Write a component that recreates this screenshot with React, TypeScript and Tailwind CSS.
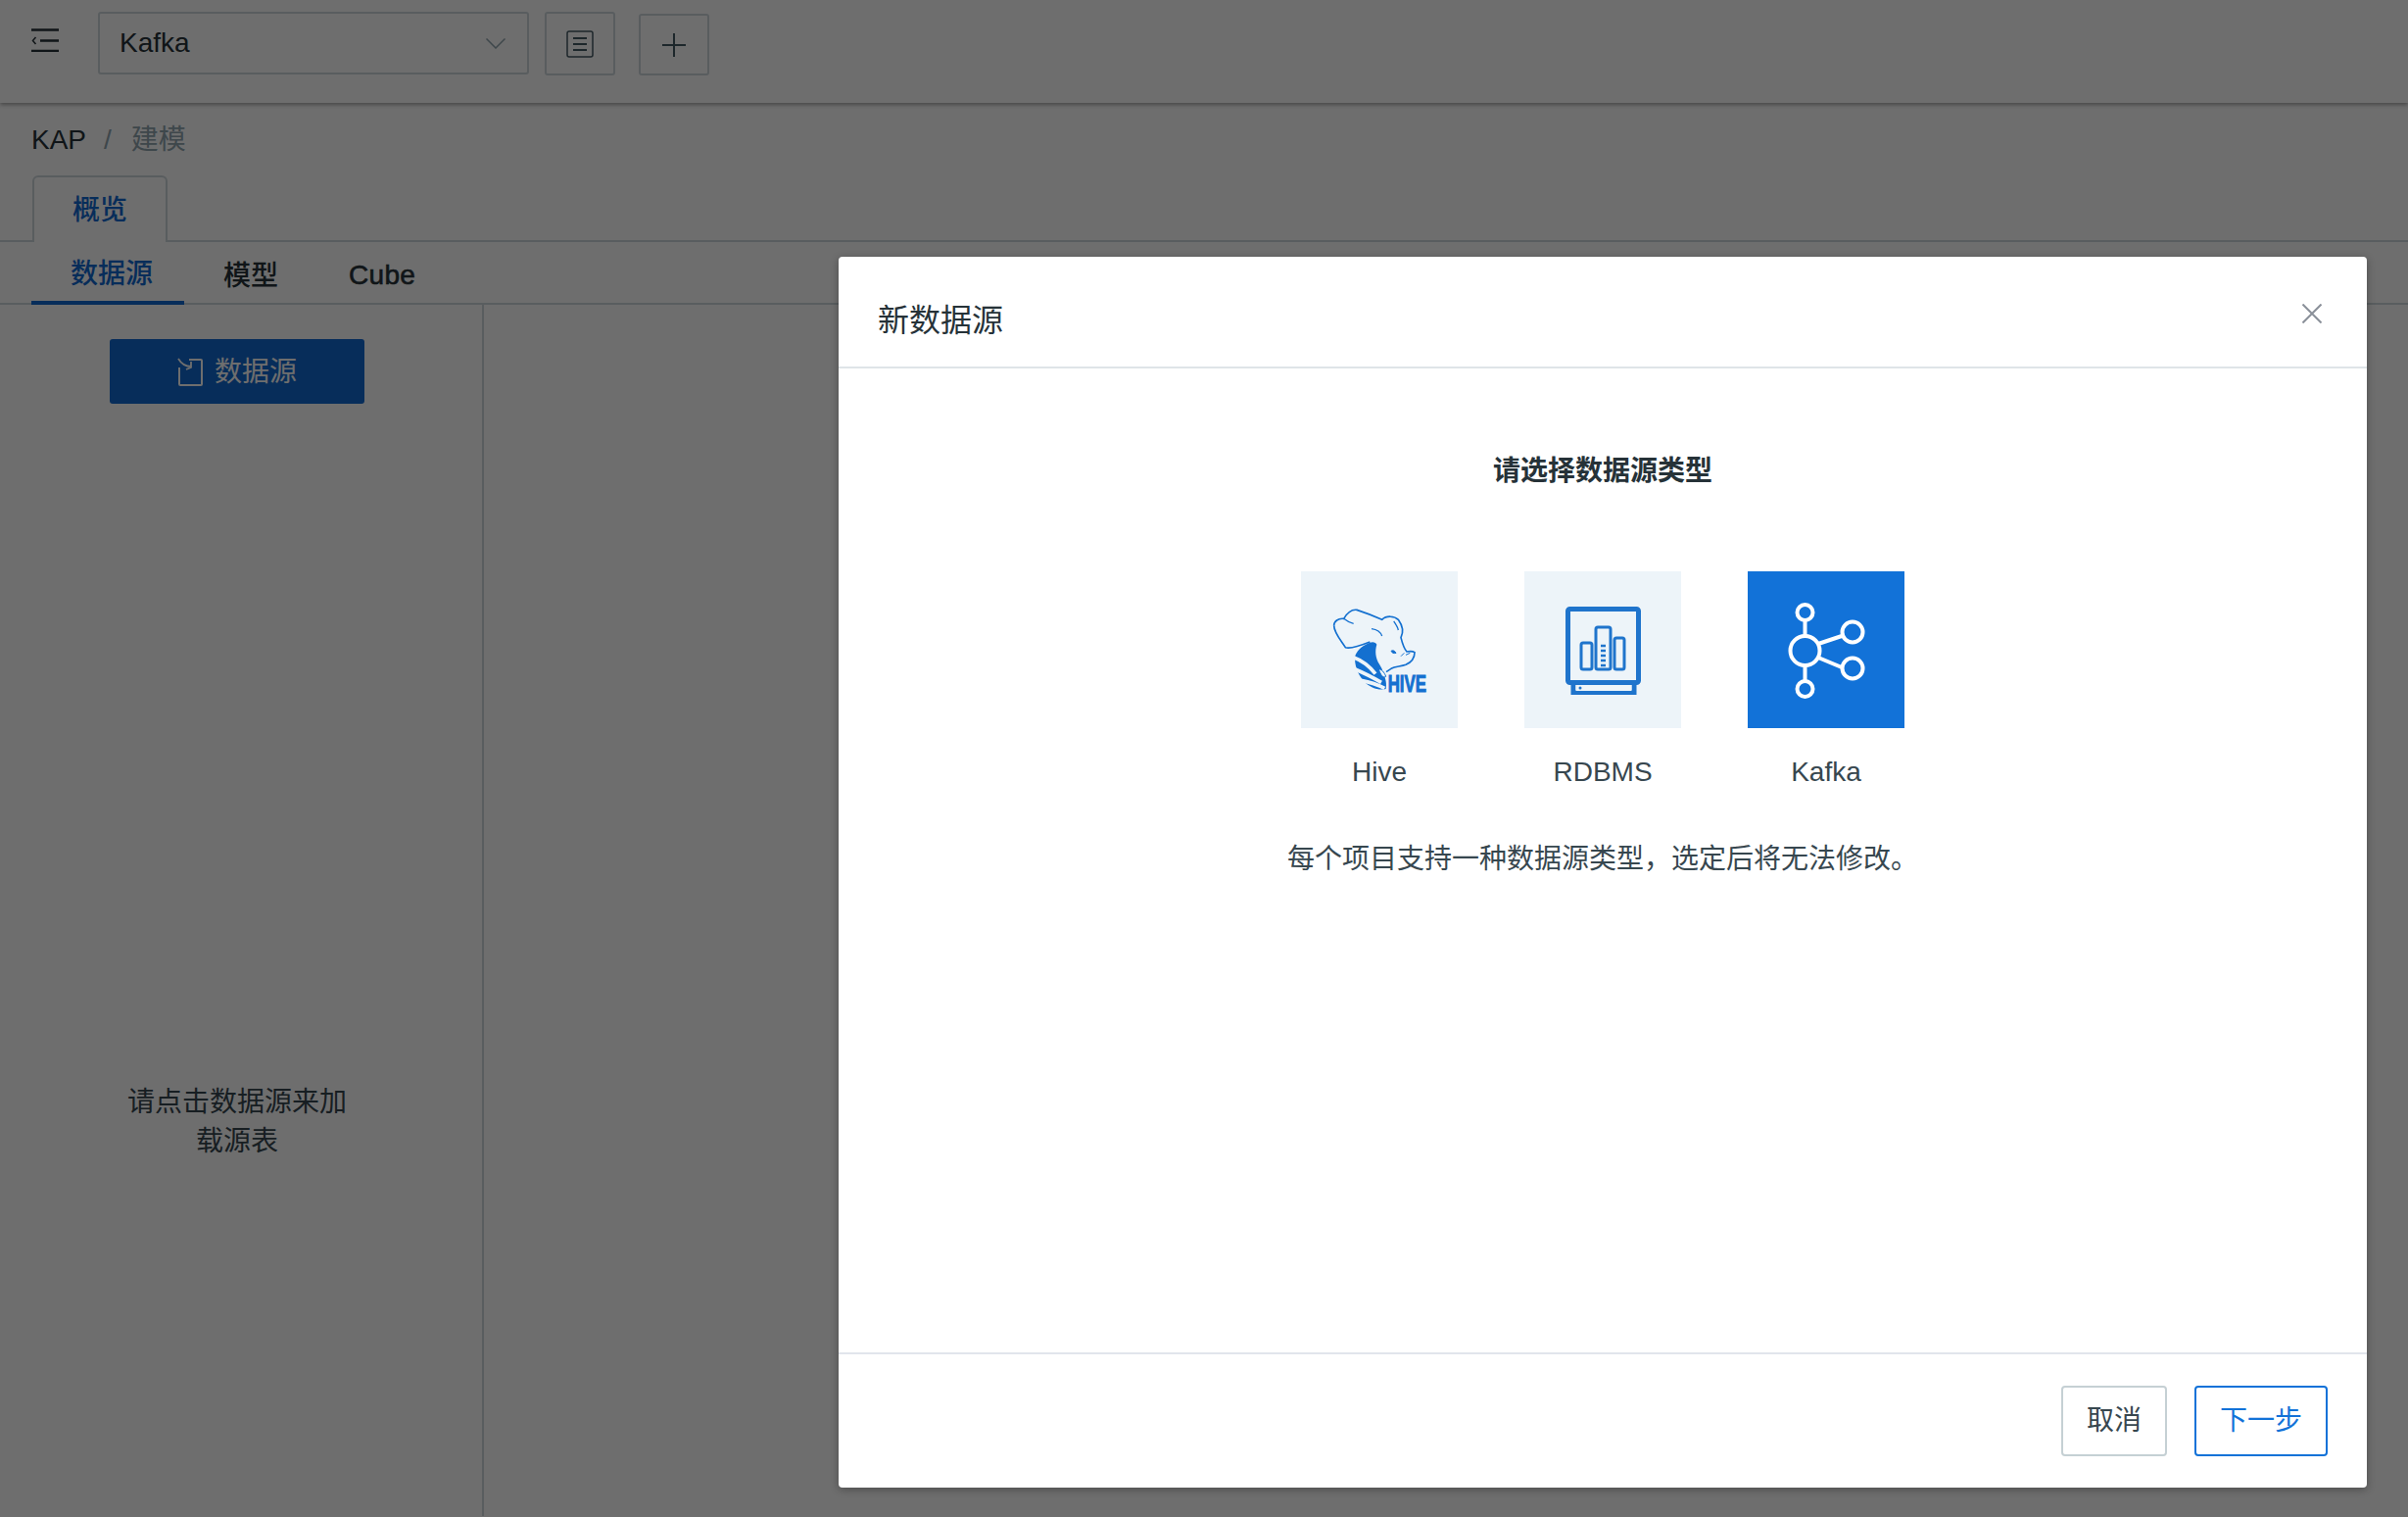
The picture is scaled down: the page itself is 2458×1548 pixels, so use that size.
const sans = "font-['Liberation_Sans','Noto_Sans_CJK_SC',sans-serif]";

const HiveLogo = () => (
  <svg viewBox="24 12 480 480" className="w-[160px] h-[160px]" fill="none" stroke="#1470d0">
    <path d="M235 230 C245 226 254 230 256 236 C250 255 252 278 264 296 C270 306 275 314 274 322 C280 334 288 350 284 372 C262 378 236 368 218 350 C198 328 186 298 190 270 C198 250 216 237 235 230 Z" fill="#1470d0" stroke="none" />
    <path d="M186 276 C208 284 232 300 252 326 M190 312 C214 322 242 336 270 352 M208 346 C230 350 254 356 280 370" stroke="#edf4f9" strokeWidth="11" />
    <path d="M125 178 C125 165 138 155 155 157 C165 140 180 128 195 130 C220 138 250 150 272 160 C285 147 310 148 322 160 C335 178 340 195 330 215 C335 235 340 250 348 258 C358 256 366 256 372 260 C372 275 362 290 345 298 C328 304 312 303 300 310 L285 320" strokeWidth="5" />
    <path d="M125 178 C125 200 145 222 160 245 C175 250 205 240 235 228" strokeWidth="5" />
    <path d="M155 157 C165 165 175 170 185 172 M240 188 C255 190 268 198 272 210 M308 165 C315 175 320 182 322 192" strokeWidth="4" />
    <path d="M300 256 C306 252 312 256 315 262 C308 264 303 262 300 256 Z M340 262 L330 272 M345 268 L358 262" fill="#1470d0" strokeWidth="3" />
    <path d="M262 312 C270 310 280 322 284 334 C276 340 268 330 262 312 Z" fill="#edf4f9" strokeWidth="3" />
    <text x="290" y="380" fill="#1470d0" stroke="#1470d0" strokeWidth="3" textLength="118" lengthAdjust="spacingAndGlyphs" className="font-['Liberation_Sans',sans-serif] font-bold text-[72px]">HIVE</text>
  </svg>
);

const RdbmsIcon = () => (
  <svg viewBox="0 0 160 160" className="w-[160px] h-[160px]" fill="none" stroke="#1f74cc">
    <rect x="44.5" y="38.5" width="72" height="75" rx="2" strokeWidth="5" />
    <path d="M50 114 V123.5 H112 V114" strokeWidth="5" />
    <rect x="52.5" y="116" width="57" height="6" fill="#edf4f9" stroke="none" />
    <circle cx="57" cy="119" r="1.5" fill="#1f74cc" stroke="none" />
    <rect x="58" y="73" width="11" height="27" rx="2" strokeWidth="3" />
    <rect x="73" y="57" width="15" height="43" rx="2" strokeWidth="3" />
    <rect x="92" y="68" width="10" height="32" rx="2" strokeWidth="3" />
    <path d="M78 76 H83 M78 81 H83 M78 86 H83 M78 91 H83 M78 96 H83" strokeWidth="2.5" />
  </svg>
);

const KafkaIcon = () => (
  <svg viewBox="0 0 160 160" className="w-[160px] h-[160px]" fill="none" stroke="#fff" strokeWidth="4">
    <circle cx="58.5" cy="81" r="15" />
    <circle cx="58.5" cy="42" r="8" />
    <circle cx="58.5" cy="120" r="8" />
    <circle cx="107" cy="62" r="10.5" />
    <circle cx="107" cy="99" r="10.5" />
    <path d="M58.5 50 V66 M58.5 96 V112 M72 74 L96 66 M72 88 L96 98" />
  </svg>
);

const sources = [
  { name: 'Hive', icon: <HiveLogo />, tile: 'bg-[#edf4f9]' },
  { name: 'RDBMS', icon: <RdbmsIcon />, tile: 'bg-[#edf4f9]' },
  { name: 'Kafka', icon: <KafkaIcon />, tile: 'bg-[#1272d8]' },
];

const TopBar = () => (
  <header className="h-[105px] flex items-start bg-white shadow-[0_2px_4px_rgba(0,0,0,0.35)] relative">
    <svg viewBox="0 0 28 24" className="w-[28px] h-[24px] ml-[32px] mt-[29px]" fill="none" stroke="#263238" strokeWidth="2.5">
      <path d="M0 1.5 H28 M9 12.5 H28 M0 23 H28" />
      <path d="M4.5 9 L1.5 12.5 L4.5 16" strokeWidth="1.5" />
    </svg>
    <div className="ml-[40px] mt-[12px] w-[440px] h-[64px] border-2 border-[#cfd8dc] rounded-[3px] flex items-center justify-between pl-[20px] pr-[22px] text-[28px] text-[#263238]">
      <span>Kafka</span>
      <svg viewBox="0 0 20 11" className="w-[20px] h-[11px]" fill="none" stroke="#90a4ae" strokeWidth="1.5">
        <path d="M0.5 0.5 L10 10 L19.5 0.5" />
      </svg>
    </div>
    <div className="ml-[16px] mt-[12px] w-[72px] h-[65px] border-2 border-[#cfd8dc] rounded-[3px] flex items-center justify-center">
      <svg viewBox="0 0 28 28" className="w-[28px] h-[28px]" fill="none" stroke="#455a64" strokeWidth="2">
        <rect x="1" y="1" width="26" height="26" rx="2" strokeWidth="1.5" />
        <path d="M7 8 H21 M7 14 H21 M7 20 H21" />
      </svg>
    </div>
    <div className="ml-[24px] mt-[14px] w-[72px] h-[63px] border-2 border-[#cfd8dc] rounded-[3px] flex items-center justify-center">
      <svg viewBox="0 0 24 24" className="w-[24px] h-[24px]" fill="none" stroke="#455a64" strokeWidth="2">
        <path d="M12 0 V24 M0 12 H24" />
      </svg>
    </div>
  </header>
);

const Sidebar = () => (
  <aside className="w-[494px] h-[1236px] border-r-2 border-[#cfd8dc] pl-[112px] pt-[35px]">
    <div className="w-[260px] h-[66px] pt-[2px] rounded-[3px] bg-[#1268d0] text-white text-[28px] flex items-center justify-center gap-[12px]">
      <svg viewBox="0 0 26 30" className="w-[26px] h-[30px]" fill="none" stroke="#fff" strokeWidth="2">
        <path d="M12 2 H24 Q25 2 25 3 V27 Q25 28 24 28 H3 Q2 28 2 27 V10" />
        <path d="M1 1 C4 6 8 9 14 9 M14 4 L14 10 L9 12" strokeWidth="1.8" />
      </svg>
      <span>数据源</span>
    </div>
    <p className="mt-[693px] ml-[18px] w-[224px] text-center text-[28px] leading-[40px] text-[#37474f]">请点击数据源来加载源表</p>
  </aside>
);

const Modal = () => (
  <div className="absolute left-[856px] top-[262px] w-[1560px] h-[1256px] bg-white rounded-[4px] shadow-[0_2px_8px_rgba(0,0,0,0.3)] flex flex-col">
    <div className="h-[114px] border-b-2 border-[#dfe4e8] flex items-start justify-between pl-[40px] pr-[46px]">
      <span className="mt-[42px] text-[32px] leading-[46px] text-[#263238]">新数据源</span>
      <svg viewBox="0 0 20 20" className="mt-[48px] w-[20px] h-[20px]" fill="none" stroke="#8a9099" strokeWidth="2">
        <path d="M0.5 0.5 L19.5 19.5 M19.5 0.5 L0.5 19.5" />
      </svg>
    </div>
    <div className="flex-1 flex flex-col items-center">
      <h2 className="mt-[85px] text-[28px] leading-[40px] font-bold text-[#263238]">请选择数据源类型</h2>
      <div className="mt-[82px] flex gap-[68px]">
        {sources.map((source) => (
          <div key={source.name} className="w-[160px] flex flex-col items-center">
            <div className={`w-[160px] h-[160px] ${source.tile}`}>{source.icon}</div>
            <span className="mt-[25px] text-[28px] leading-[40px] text-[#37474f]">{source.name}</span>
          </div>
        ))}
      </div>
      <p className="mt-[49px] text-[28px] leading-[40px] text-[#37474f]">每个项目支持一种数据源类型，选定后将无法修改。</p>
    </div>
    <div className="h-[138px] border-t-2 border-[#e1e5ec] flex items-start justify-end gap-[28px] pr-[40px] pt-[32px]">
      <button className="w-[108px] h-[72px] border-2 border-[#c5d0d4] rounded-[4px] text-[28px] text-[#37474f]">取消</button>
      <button className="w-[136px] h-[72px] border-2 border-[#1272d8] rounded-[4px] text-[28px] text-[#1272d8]">下一步</button>
    </div>
  </div>
);

export default function App() {
  return (
    <div className={`relative w-full h-[1548px] overflow-hidden bg-white ${sans}`}>
      <TopBar />
      <div className="pl-[32px] pt-[17px] h-[59px] flex items-center text-[28px] leading-[40px]">
        <span className="text-[#263238]">KAP</span>
        <span className="ml-[18px] text-[#90a4ae]">/</span>
        <span className="ml-[20px] text-[#90a4ae]">建模</span>
      </div>
      <div className="h-[83px] border-b-2 border-[#cfd8dc] pl-[33px] flex items-end">
        <div className="w-[138px] h-[68px] -mb-[2px] pt-[2px] bg-white border-2 border-b-0 border-[#cfd8dc] rounded-t-[6px] flex items-center justify-center text-[28px] font-medium text-[#1268d0]">概览</div>
      </div>
      <nav className="h-[64px] border-b-2 border-[#cfd8dc] pl-[32px] flex items-end text-[28px] font-medium text-[#263238]">
        <span className="w-[156px] h-[64px] -mb-[2px] pl-[40px] pt-[5px] border-b-4 border-[#1268d0] text-[#1268d0] flex items-center">数据源</span>
        <span className="h-[62px] pt-[7px] ml-[40px] flex items-center">模型</span>
        <span className="h-[62px] pt-[6px] ml-[72px] flex items-center tracking-[0.3px] [-webkit-text-stroke:0.6px_#263238]">Cube</span>
      </nav>
      <Sidebar />
      <div className="absolute inset-0 bg-[rgba(0,0,0,0.57)]" />
      <Modal />
    </div>
  );
}
